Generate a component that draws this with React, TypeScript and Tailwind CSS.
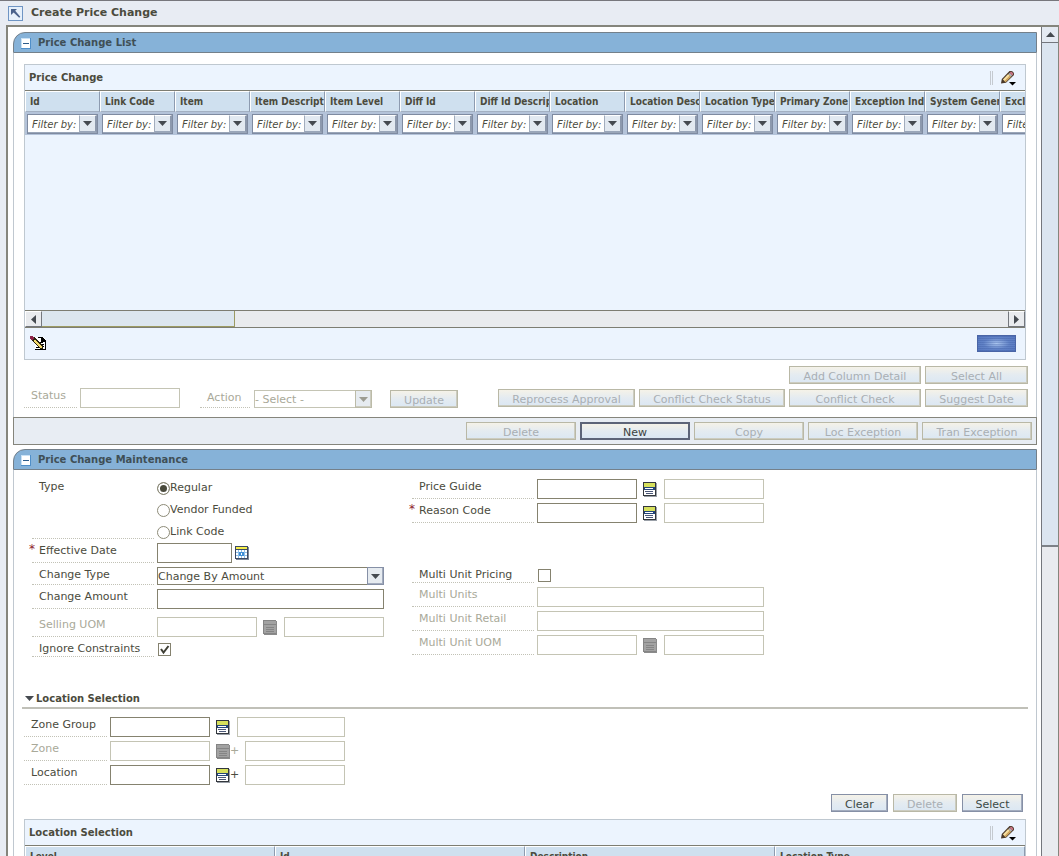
import type { ReactNode } from "react";

type Column = { title: string; width: string };

const priceColumns: string[] = [
  "Id",
  "Link Code",
  "Item",
  "Item Description",
  "Item Level",
  "Diff Id",
  "Diff Id Description",
  "Location",
  "Location Description",
  "Location Type",
  "Primary Zone",
  "Exception Indicator",
  "System Generated",
  "Exclusion",
];

const locationColumns: Column[] = [
  { title: "Level", width: "w-1/4" },
  { title: "Id", width: "w-1/4" },
  { title: "Description", width: "w-1/4" },
  { title: "Location Type", width: "w-1/4" },
];

const recordActions = [
  { text: "Delete", disabled: true },
  { text: "New", disabled: false },
  { text: "Copy", disabled: true },
  { text: "Loc Exception", disabled: true },
  { text: "Tran Exception", disabled: true },
];

/* ---------- icons ---------- */

function BackIcon() {
  return (
    <svg width="15" height="15" viewBox="0 0 15 15">
      <rect x="0.5" y="0.5" width="14" height="14" fill="#e6f0fb" stroke="#6f95c4" />
      <path d="M3 3h6L7.200 4.800 12.300 10.700 11.200 11.800 5.600 6.400 3 9z" fill="#4a628c" />
    </svg>
  );
}

function MinusIcon() {
  return (
    <svg width="10" height="11" viewBox="0 0 10 11" shapeRendering="crispEdges">
      <rect width="10" height="11" fill="#4f8fc9" />
      <rect width="9" height="10" fill="#c9e2f6" />
      <rect x="1" y="1" width="8" height="9" fill="#fff" />
      <rect x="2" y="5" width="6" height="1" fill="#2d5c8a" />
    </svg>
  );
}

function Triangle({ dir = "down", color = "#454a50" }: { dir?: "down" | "up" | "left" | "right"; color?: string }) {
  const paths = {
    down: "M0 2h9L4.500 7z",
    up: "M0 7h9L4.500 2z",
    left: "M7 0v9L2 4.500z",
    right: "M2 0v9L7 4.500z",
  };
  return (
    <svg width="9" height="9" viewBox="0 0 9 9">
      <path d={paths[dir]} fill={color} />
    </svg>
  );
}

function PencilMenuIcon() {
  return (
    <svg width="17" height="16" viewBox="0 0 17 16">
      <path d="M1 13.500l.8-4.500L9.500 1h2.500l2 2v2L6 12.700z" fill="#4a3828" />
      <path d="M2.900 9.400L8.200 4.100l2.700 2.700-5.300 5.300z" fill="#f7e0a0" />
      <path d="M4.400 10.900L9.700 5.600l1.200 1.200-5.300 5.300z" fill="#cfa35a" />
      <path d="M9.600 2.900l1.100-1.100h1L13.200 3.400v1l-1.200 1.200z" fill="#c87484" />
      <path d="M8.500 3.900l.9-.9 2.600 2.600-.9.900z" fill="#c0c3ca" />
      <path d="M9 12h7l-3.500 3.500z" fill="#000" />
    </svg>
  );
}

function EditPageIcon() {
  return (
    <svg width="17" height="15" viewBox="0 0 17 15" shapeRendering="crispEdges">
      <path d="M5 1h8l3 3v10H5z" fill="#fff" />
      <path d="M8 1.500h4M5 13.500h11M15.500 4v10" stroke="#000" />
      <path d="M11.500 1v4h4v-1h-1v-1h-1v-1h-1v-1z" fill="#000" stroke="#000" />
      <path d="M10 6.500h3M12 8.500h2M12 10.500h2M6 11.500h3" stroke="#000" />
      <path d="M1 1h3l9 9v3h-3L1 4z" fill="#2b2410" />
      <path d="M4 4h1l7 7v1h-1L3 5z" fill="#f5dc6e" />
      <path d="M0 0h3v1h1v2H3v1H1V3H0z" fill="#8d2348" />
    </svg>
  );
}

function ListIcon({ disabled = false }: { disabled?: boolean }) {
  if (disabled) {
    return (
      <svg width="14" height="15" viewBox="0 0 14 15" shapeRendering="crispEdges">
        <rect x="1" y="1" width="13" height="14" fill="#8b8b8b" />
        <rect width="13" height="14" fill="#a2a2a2" />
        <path d="M0 .5h13M.5 0v14M1 4.500h12M3 7.500h8M3 9.500h8M3 11.500h8M0 13.500h13" stroke="#858585" />
      </svg>
    );
  }
  return (
    <svg width="14" height="15" viewBox="0 0 14 15" shapeRendering="crispEdges">
      <rect x="1" y="1" width="13" height="14" fill="#9aa0a8" />
      <rect width="13" height="14" fill="#33373d" />
      <rect x="1" y="1" width="11" height="4" fill="#d6e05c" />
      <rect x="1" y="5" width="11" height="3" fill="#23467a" />
      <rect x="2" y="6" width="8" height="1" fill="#fff" />
      <rect x="1" y="8" width="11" height="5" fill="#fff" />
      <path d="M2 9.500h8M3 11.500h7" stroke="#4b5878" />
    </svg>
  );
}

function CalendarIcon() {
  return (
    <svg width="14" height="14" viewBox="0 0 14 14" shapeRendering="crispEdges">
      <rect x="1" y="1" width="13" height="13" fill="#7d8797" />
      <rect width="13" height="13" fill="#3d4a63" />
      <rect x="1" y="1" width="11" height="2" fill="#f6ef4a" />
      <rect x="1" y="4" width="11" height="8" fill="#8fbfe8" />
      <path d="M1 4h2v2H1zM4 4h2v2H4zM7 4h2v2H7zM10 4h2v2h-2zM1 7h2v2H1zM10 7h2v2h-2zM1 10h2v2H1zM4 10h2v2H4zM7 10h2v2H7zM10 10h2v2h-2z" fill="#fff" />
      <rect x="4" y="6" width="5" height="4" fill="#3f8fd6" />
      <rect x="6" y="7" width="1" height="2" fill="#fff" />
    </svg>
  );
}

/* ---------- controls ---------- */

function Btn({ children, disabled = false, strong = false, className = "" }: {
  children: ReactNode;
  disabled?: boolean;
  strong?: boolean;
  className?: string;
}) {
  const look = disabled
    ? "border border-[#b9b8a6] shadow-[inset_-1px_-1px_0_#ccccc0] text-[#a9afb4]"
    : strong
      ? "border-2 border-[#5d6478] text-[#3c4140]"
      : "border border-[#8690a6] shadow-[inset_-1px_-1px_0_#a3acbe] text-[#3c4a46]";
  return (
    <button
      type="button"
      disabled={disabled}
      className={`flex h-[18px] items-center justify-center bg-linear-to-b from-[#f5f2e8] via-[#e4ebf1] to-[#dbe7f3] pt-0.5 leading-none whitespace-nowrap ${look} ${className}`}
    >
      {children}
    </button>
  );
}

function Field({ id, label, disabled = false, readOnly = false, className = "w-[100px]" }: {
  id?: string;
  label?: string;
  disabled?: boolean;
  readOnly?: boolean;
  className?: string;
}) {
  const border = disabled || readOnly ? "border-[#c4c4b4]" : "border-[#85826f]";
  return (
    <input
      id={id}
      type="text"
      aria-label={label}
      disabled={disabled}
      readOnly={readOnly}
      className={`h-5 border bg-white px-1 ${border} ${className}`}
    />
  );
}

function Row({ label, id, disabled = false, required = false, labelWidth = "w-[122px]", className = "h-6", children }: {
  label: string;
  id: string;
  disabled?: boolean;
  required?: boolean;
  labelWidth?: string;
  className?: string;
  children: ReactNode;
}) {
  return (
    <div className={`flex items-end ${className}`}>
      <label
        htmlFor={id}
        className={`relative mr-[3px] h-full border-b border-dotted border-[#c2c2b6] pt-[5px] pl-[7px] leading-[14px] whitespace-nowrap ${labelWidth} ${disabled ? "text-[#a9a999]" : ""}`}
      >
        {required && <span className="absolute top-0.5 -left-[3px] text-xs text-[#8d1a2c]">*</span>}
        {label}
      </label>
      {children}
    </div>
  );
}

function Lookup({ id, label, disabled = false, plus = false, descWidth = "w-[100px]" }: {
  id: string;
  label: string;
  disabled?: boolean;
  plus?: boolean;
  descWidth?: string;
}) {
  return (
    <>
      <Field id={id} disabled={disabled} />
      <button type="button" aria-label={`Look up ${label}`} disabled={disabled} className="ml-1.5 flex h-[17px] items-start">
        <ListIcon disabled={disabled} />
      </button>
      {plus && <span className={`w-2 leading-5 ${disabled ? "text-[#a9a999]" : ""}`}>+</span>}
      <Field label={`${label} description`} readOnly className={`ml-[7px] ${descWidth}`} />
    </>
  );
}

function Radio({ id, text, checked = false }: { id: string; text: string; checked?: boolean }) {
  return (
    <div className="flex h-[22px] items-center">
      <input
        id={id}
        type="radio"
        name="type"
        defaultChecked={checked}
        className="size-[13px] appearance-none rounded-full border border-[#8d8b78] bg-white checked:bg-[#4a4a3c] checked:shadow-[inset_0_0_0_2px_white]"
      />
      <label htmlFor={id}>{text}</label>
    </div>
  );
}

function Select({ id, options, disabled = false, className }: {
  id: string;
  options: string[];
  disabled?: boolean;
  className: string;
}) {
  return (
    <div className={`relative h-[18px] ${className}`}>
      <select
        id={id}
        disabled={disabled}
        className={`size-full appearance-none border bg-white pt-px leading-none ${disabled ? "border-[#c4c4b4] text-[#a9a999] opacity-100" : "border-[#85826f]"}`}
      >
        {options.map((o) => (
          <option key={o}>{o}</option>
        ))}
      </select>
      <span
        className={`pointer-events-none absolute inset-y-0 right-0 flex w-[17px] items-center justify-center border bg-[#e6ebf0] ${disabled ? "border-[#bcbba8] shadow-[inset_-1px_-1px_0_#ccccc0]" : "border-[#8690a6] shadow-[inset_-1px_-1px_0_#a3acbe]"}`}
      >
        <Triangle color={disabled ? "#9c9c92" : "#454a50"} />
      </span>
    </div>
  );
}

function SectionHeader({ children }: { children: ReactNode }) {
  return (
    <h2 className="flex h-[21px] items-center gap-[7px] rounded-tl-xl border border-[#74808a] bg-[#86b2d8] pl-[7px] text-[10px] font-bold text-[#3f4f56]">
      <button type="button" aria-label="Collapse section" className="mt-0.5">
        <MinusIcon />
      </button>
      {children}
    </h2>
  );
}

function TableTitle({ children }: { children: ReactNode }) {
  return (
    <div className="flex h-[25px] items-center justify-between pr-2 pl-1">
      <h3 className="text-[10px] font-bold">{children}</h3>
      <div className="flex items-center gap-[7px]">
        <span className="h-[14px] w-[3px] border-x border-[#c5cad0]" />
        <button type="button" aria-label="Table options">
          <PencilMenuIcon />
        </button>
      </div>
    </div>
  );
}

function HeaderCell({ title, className = "" }: { title: string; className?: string }) {
  return (
    <th
      scope="col"
      className={`h-[21px] overflow-hidden border-t border-r border-b border-l border-t-white border-r-[#8d9bb0] border-b-[#a3b0c2] border-l-white bg-[#cfe0ef] p-0 pl-1 text-left text-[10px] font-bold whitespace-nowrap font-['DejaVu_Sans_Condensed','DejaVu_Sans',sans-serif] ${className}`}
    >
      {title}
    </th>
  );
}

/* ---------- page sections ---------- */

function PriceChangeTable() {
  return (
    <div className="mx-[10px] border border-[#bfc8d0] bg-[#ecf4fe]">
      <TableTitle>Price Change</TableTitle>
      <div className="overflow-hidden border-t border-[#7d7d72]">
        <table className="w-[1050px] table-fixed border-separate border-spacing-0">
          <thead>
            <tr>
              {priceColumns.map((c) => (
                <HeaderCell key={c} title={c} />
              ))}
            </tr>
            <tr>
              {priceColumns.map((c) => (
                <td key={c} className="h-[23px] bg-[#b4c3d9] p-0 px-[2px] pb-px align-bottom">
                  <div className="flex h-[20px] border border-[#7f8ba1] bg-white shadow-[inset_-1px_-1px_0_#9aa6b9]">
                    <input
                      type="text"
                      aria-label={`Filter ${c}`}
                      defaultValue="Filter by:"
                      className="w-full min-w-0 pl-1 text-[10px] italic"
                    />
                    <button
                      type="button"
                      aria-label={`Filter options for ${c}`}
                      className="flex w-[18px] shrink-0 items-center justify-center border border-r-2 border-b-2 border-r-[#8d99ad] border-b-[#9aa6b9] border-l-[#a3adbd] border-t-white bg-[#e2e9f1]"
                    >
                      <Triangle />
                    </button>
                  </div>
                </td>
              ))}
            </tr>
          </thead>
        </table>
        <div className="h-[175px]" />
      </div>
      <div className="flex h-[18px] border-y border-[#7d7d72] bg-[#e9ebee]">
        <button type="button" aria-label="Scroll left" className="flex w-[17px] items-center justify-center border border-r-[#74777d] border-b-[#74777d] border-l-white border-t-white">
          <Triangle dir="left" />
        </button>
        <div className="flex flex-1">
          <div className="w-1/5 border-r border-b border-[#9b9a62] bg-[#dce6ef]" />
        </div>
        <button type="button" aria-label="Scroll right" className="flex w-[17px] items-center justify-center border border-r-[#74777d] border-b-[#74777d] border-l-[#74777d] border-t-white">
          <Triangle dir="right" />
        </button>
      </div>
      <div className="flex h-[31px] items-center justify-between pr-[9px] pl-[5px]">
        <button type="button" aria-label="Edit rows">
          <EditPageIcon />
        </button>
        <div className="h-[17px] w-[39px] border border-[#4a65a6] bg-[repeating-linear-gradient(to_bottom,rgba(50,80,150,0.25)_0_1px,transparent_1px_2px),radial-gradient(ellipse_at_center,#a9c4ee,#6384c8_50%,#5576be)]" />
      </div>
    </div>
  );
}

function StatusBar() {
  return (
    <div className="flex items-end justify-between pt-[6px] pr-2 pb-[9px] pl-[10px]">
      <div className="flex items-end">
        <Row id="status" label="Status" disabled labelWidth="w-[53px]">
          <Field id="status" disabled />
        </Row>
        <div className="ml-5">
          <Row id="action" label="Action" disabled labelWidth="w-[50px]" className="h-[22px]">
            <Select id="action" options={["- Select -"]} disabled className="ml-px w-[118px]" />
          </Row>
        </div>
        <Btn disabled className="ml-[18px] w-[68px]">Update</Btn>
      </div>
      <div className="mb-px grid grid-cols-[137px_146px_132px_103px] gap-x-1 gap-y-[5px]">
        <Btn disabled className="col-start-3">Add Column Detail</Btn>
        <Btn disabled>Select All</Btn>
        <Btn disabled>Reprocess Approval</Btn>
        <Btn disabled>Conflict Check Status</Btn>
        <Btn disabled>Conflict Check</Btn>
        <Btn disabled>Suggest Date</Btn>
      </div>
    </div>
  );
}

function MaintenanceForm() {
  return (
    <div className="flex pl-[18px]">
      <div className="w-[380px]">
        <div className="flex h-[69px]">
          <div id="type-label" className="mr-[3px] w-[122px] border-b border-dotted border-[#c2c2b6] pt-[10px] pl-[7px] leading-[14px]">
            Type
          </div>
          <div role="radiogroup" aria-labelledby="type-label" className="pt-[7px]">
            <Radio id="regular" text="Regular" checked />
            <Radio id="vendor" text="Vendor Funded" />
            <Radio id="link" text="Link Code" />
          </div>
        </div>
        <Row id="effective" label="Effective Date" required>
          <Field id="effective" className="w-[75px]" />
          <button type="button" aria-label="Pick a date" className="ml-[3px] flex h-[17px] items-start">
            <CalendarIcon />
          </button>
        </Row>
        <Row id="changeType" label="Change Type" className="h-[22px]">
          <Select id="changeType" options={["Change By Amount", "Change By Percent", "Fixed Price"]} className="w-[227px]" />
        </Row>
        <Row id="changeAmount" label="Change Amount">
          <Field id="changeAmount" className="w-[227px]" />
        </Row>
        <Row id="sellingUom" label="Selling UOM" disabled className="mt-1 h-6">
          <Lookup id="sellingUom" label="Selling UOM" disabled />
        </Row>
        <Row id="ignore" label="Ignore Constraints" className="h-5">
          <span className="relative mb-px ml-px size-[13px]">
            <input id="ignore" type="checkbox" defaultChecked className="peer block size-full appearance-none border border-[#85826f] bg-white" />
            <svg width="13" height="13" viewBox="0 0 13 13" className="pointer-events-none absolute inset-0 hidden peer-checked:block">
              <path d="M3 6l2.500 3.500L10.500 3" fill="none" stroke="#3f3f35" strokeWidth="2" />
            </svg>
          </span>
        </Row>
      </div>
      <div className="pt-[5px]">
        <Row id="priceGuide" label="Price Guide">
          <Lookup id="priceGuide" label="Price Guide" />
        </Row>
        <Row id="reason" label="Reason Code" required>
          <Lookup id="reason" label="Reason Code" />
        </Row>
        <div className="mt-10">
          <Row id="multiPricing" label="Multi Unit Pricing" className="h-5">
            <input id="multiPricing" type="checkbox" className="mb-px ml-px size-[13px] appearance-none border border-[#85826f] bg-white checked:bg-[#4a4a3c]" />
          </Row>
          <Row id="multiUnits" label="Multi Units" disabled>
            <Field id="multiUnits" disabled className="w-[227px]" />
          </Row>
          <Row id="multiRetail" label="Multi Unit Retail" disabled>
            <Field id="multiRetail" disabled className="w-[227px]" />
          </Row>
          <Row id="multiUom" label="Multi Unit UOM" disabled>
            <Lookup id="multiUom" label="Multi Unit UOM" disabled />
          </Row>
        </div>
      </div>
    </div>
  );
}

function LocationSelection() {
  return (
    <div className="mt-8">
      <div className="mr-2 ml-2 flex h-5 items-center gap-[2px] border-b-2 border-[#c0c0b8] pl-[3px]">
        <Triangle />
        <h3 className="text-[10px] font-bold">Location Selection</h3>
      </div>
      <div className="pt-1 pl-[10px]">
        <Row id="zoneGroup" label="Zone Group" labelWidth="w-[83px]">
          <Lookup id="zoneGroup" label="Zone Group" descWidth="w-[108px]" />
        </Row>
        <Row id="zone" label="Zone" disabled labelWidth="w-[83px]">
          <Lookup id="zone" label="Zone" disabled plus />
        </Row>
        <Row id="location" label="Location" labelWidth="w-[83px]">
          <Lookup id="location" label="Location" plus />
        </Row>
      </div>
      <div className="mt-[9px] mr-[13px] mb-[7px] flex justify-end gap-[5px]">
        <Btn className="w-[57px]">Clear</Btn>
        <Btn disabled className="w-[64px]">Delete</Btn>
        <Btn className="w-[61px]">Select</Btn>
      </div>
      <div className="mx-[10px] border border-[#bfc8d0] bg-[#ecf4fe]">
        <TableTitle>Location Selection</TableTitle>
        <div className="border-t border-[#7d7d72]">
          <table className="w-full table-fixed border-separate border-spacing-0">
            <thead>
              <tr>
                {locationColumns.map((c) => (
                  <HeaderCell key={c.title} title={c.title} className={c.width} />
                ))}
              </tr>
            </thead>
          </table>
          <div className="h-[175px]" />
        </div>
      </div>
    </div>
  );
}

export default function App() {
  return (
    <div className="flex h-screen flex-col overflow-hidden border-t border-[#77777c] bg-[#e8ecf3] pl-[6px] font-['DejaVu_Sans',Verdana,sans-serif] text-[11px] text-[#4b4b3d]">
      <header className="flex h-6 shrink-0 items-center gap-2 pt-px pl-[2px]">
        <button type="button" aria-label="Back">
          <BackIcon />
        </button>
        <h1 className="font-bold">Create Price Change</h1>
      </header>
      <div className="flex min-h-0 flex-1 border-2 border-r border-b-0 border-[#85857c] bg-white">
        <main className="min-w-0 flex-1 overflow-hidden pt-[5px] pr-1 pl-[5px]">
          <section>
            <SectionHeader>Price Change List</SectionHeader>
            <div className="border-x border-[#c0c8d0] pt-[11px]">
              <PriceChangeTable />
              <StatusBar />
            </div>
            <div className="flex h-7 items-center justify-end gap-1 border border-[#85857c] bg-[#e8edf3] pr-1">
              {recordActions.map((a) => (
                <Btn key={a.text} disabled={a.disabled} strong={!a.disabled} className="w-[110px]">
                  {a.text}
                </Btn>
              ))}
            </div>
          </section>
          <section className="mt-1">
            <SectionHeader>Price Change Maintenance</SectionHeader>
            <div className="border-x border-[#c0c8d0]">
              <MaintenanceForm />
              <LocationSelection />
            </div>
          </section>
        </main>
        <div className="flex w-[17px] shrink-0 flex-col border-l border-[#74777d] bg-[#e9ebef]">
          <button type="button" aria-label="Scroll up" className="flex h-4 shrink-0 items-center justify-center border-b border-[#74777d] bg-[#e4eaf2]">
            <Triangle dir="up" />
          </button>
          <div className="min-h-0 flex-1">
            <div className="h-[62%] border-b-2 border-[#7d8288] bg-[#dbe5f0]" />
          </div>
        </div>
      </div>
    </div>
  );
}
